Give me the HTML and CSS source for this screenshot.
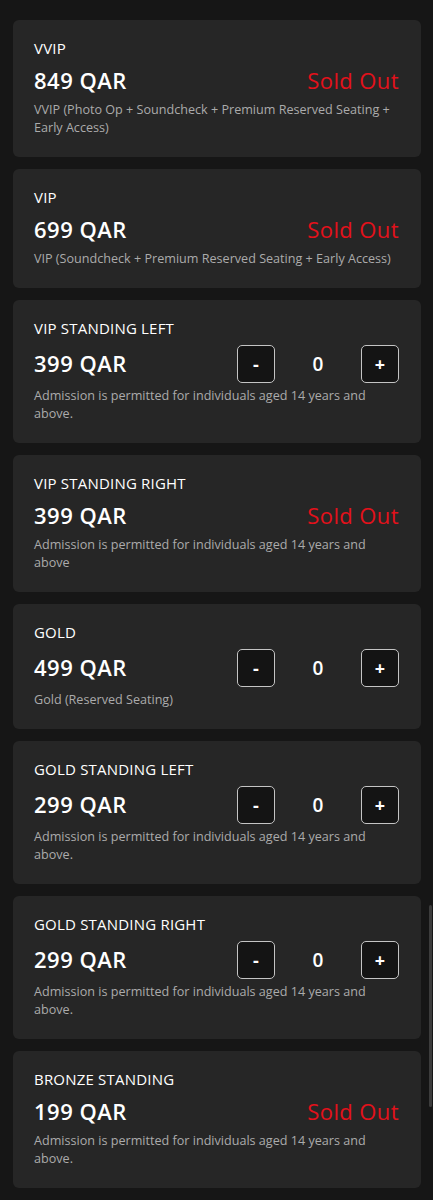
FILE: index.html
```html
<!DOCTYPE html>
<html lang="en">
<head>
  <meta charset="UTF-8" />
  <meta name="viewport" content="width=device-width, initial-scale=1.0" />
  <title>Tickets</title>
  <link rel="stylesheet" href="styles.css">
</head>
<body>
  <div class="ticket-list">

    <div class="ticket">
      <h3 class="ticket-name">VVIP</h3>
      <div class="ticket-row"><span class="price">849 QAR</span><span class="sold-out">Sold Out</span></div>
      <p class="desc">VVIP (Photo Op + Soundcheck + Premium Reserved Seating + Early Access)</p>
    </div>

    <div class="ticket">
      <h3 class="ticket-name">VIP</h3>
      <div class="ticket-row"><span class="price">699 QAR</span><span class="sold-out">Sold Out</span></div>
      <p class="desc">VIP (Soundcheck + Premium Reserved Seating + Early Access)</p>
    </div>

    <div class="ticket">
      <h3 class="ticket-name">VIP STANDING LEFT</h3>
      <div class="ticket-row">
        <span class="price">399 QAR</span>
        <div class="counter"><button class="qty-btn">-</button><span class="qty">0</span><button class="qty-btn">+</button></div>
      </div>
      <p class="desc">Admission is permitted for individuals aged 14 years and above.</p>
    </div>

    <div class="ticket">
      <h3 class="ticket-name">VIP STANDING RIGHT</h3>
      <div class="ticket-row"><span class="price">399 QAR</span><span class="sold-out">Sold Out</span></div>
      <p class="desc">Admission is permitted for individuals aged 14 years and above</p>
    </div>

    <div class="ticket">
      <h3 class="ticket-name">GOLD</h3>
      <div class="ticket-row">
        <span class="price">499 QAR</span>
        <div class="counter"><button class="qty-btn">-</button><span class="qty">0</span><button class="qty-btn">+</button></div>
      </div>
      <p class="desc">Gold (Reserved Seating)</p>
    </div>

    <div class="ticket">
      <h3 class="ticket-name">GOLD STANDING LEFT</h3>
      <div class="ticket-row">
        <span class="price">299 QAR</span>
        <div class="counter"><button class="qty-btn">-</button><span class="qty">0</span><button class="qty-btn">+</button></div>
      </div>
      <p class="desc">Admission is permitted for individuals aged 14 years and above.</p>
    </div>

    <div class="ticket">
      <h3 class="ticket-name">GOLD STANDING RIGHT</h3>
      <div class="ticket-row">
        <span class="price">299 QAR</span>
        <div class="counter"><button class="qty-btn">-</button><span class="qty">0</span><button class="qty-btn">+</button></div>
      </div>
      <p class="desc">Admission is permitted for individuals aged 14 years and above.</p>
    </div>

    <div class="ticket">
      <h3 class="ticket-name">BRONZE STANDING</h3>
      <div class="ticket-row"><span class="price">199 QAR</span><span class="sold-out">Sold Out</span></div>
      <p class="desc">Admission is permitted for individuals aged 14 years and above.</p>
    </div>

  </div>

  <div class="scroll-thumb"></div>
</body>
</html>
```

FILE: styles.css
```css
:root {
  --bg-page: #161616;
  --bg-card: #262626;
  --text: #ffffff;
  --text-light: #ababab;
  --red: #e3111b;
}

* { box-sizing: border-box; }
body {
  margin: 0;
  font-family: "Open Sans", "Noto Sans", sans-serif;
  background: var(--bg-page);
  color: var(--text);
}

.ticket-list {
  padding: 20px 12px 12px 13px;
  display: flex;
  flex-direction: column;
  gap: 12px;
}

.ticket {
  background: var(--bg-card);
  border-radius: 6px;
  padding: 18px 22px 20px 21px;
}
.ticket-name {
  margin: 0;
  font-size: 15px;
  line-height: 20px;
  font-weight: 500;
  letter-spacing: 0.2px;
}

.ticket-row {
  margin-top: 7px;
  display: flex;
  justify-content: space-between;
  align-items: center;
  min-height: 31px;
}
.price { font-size: 22px; font-weight: 600; line-height: 31px; letter-spacing: 0.5px; }
.sold-out { font-size: 22px; line-height: 31px; color: var(--red); letter-spacing: 0.4px; }

.counter { display: flex; align-items: center; margin: -0.5px 0; }
.qty { width: 86px; text-align: center; font-size: 19px; font-weight: 600; }
.qty-btn {
  width: 38px;
  height: 38px;
  padding: 0;
  background: #141414;
  border: 1px solid #c4c4c4;
  border-radius: 5px;
  color: #fff;
  font-family: inherit;
  font-size: 18px;
  font-weight: 700;
  cursor: pointer;
}

.desc {
  margin: 5px 0 0;
  font-size: 12.6px;
  line-height: 18px;
  color: var(--text-light);
}

.scroll-thumb {
  position: fixed;
  right: 1px;
  top: 905px;
  width: 3px;
  height: 202px;
  background: #3c3c3c;
  border-radius: 2px;
}
```
